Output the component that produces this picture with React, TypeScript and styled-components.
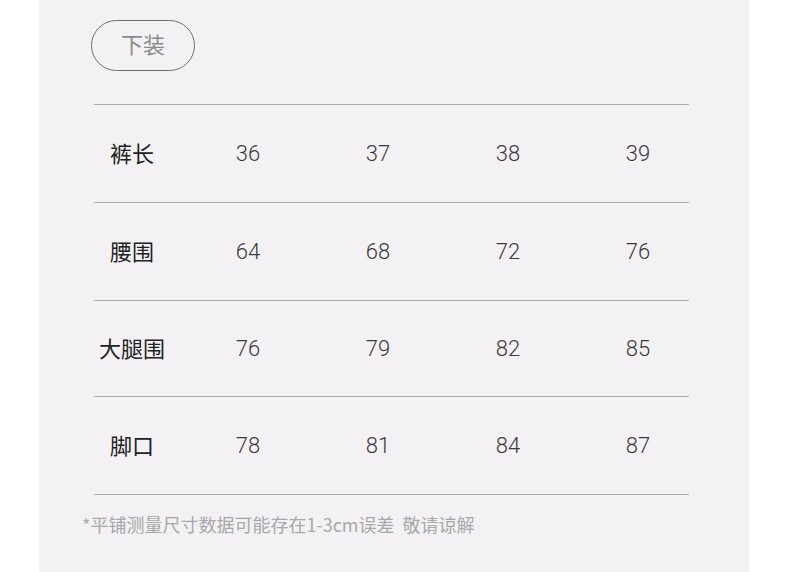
import React from "react";
import styled, { createGlobalStyle } from "styled-components";

const Global = createGlobalStyle`
  html, body { margin: 0; padding: 0; background: #ffffff; }
  body { font-family: "Noto Sans CJK SC", "Noto Sans", sans-serif; }
`;

const Page = styled.div`
  width: 790px;
  height: 572px;
  display: flex;
`;

const Panel = styled.div`
  margin-left: 39px;
  width: 710px;
  height: 572px;
  background: #f3f1f4;
  box-sizing: border-box;
  padding: 20px 0 0 52px;
  display: flex;
  flex-direction: column;
`;

const Pill = styled.div`
  width: 104px;
  height: 51px;
  box-sizing: border-box;
  border: 1px solid #6f6f6f;
  border-radius: 26px;
  display: flex;
  align-items: center;
  justify-content: center;
  font-size: 22px;
  color: #8a8a8a;
  font-family: "Noto Sans CJK SC", sans-serif;
  line-height: 1;
  padding-bottom: 5px;
`;

const Table = styled.div`
  margin-top: 33px;
  margin-left: 3px;
  width: 595px;
  display: flex;
  flex-direction: column;
  border-bottom: 1px solid #ababab;
`;

const Row = styled.div<{ $h: number }>`
  height: ${(p) => p.$h}px;
  border-top: 1px solid #ababab;
  display: grid;
  grid-template-columns: 89px repeat(4, 130px);
  align-items: center;
`;

const Label = styled.div`
  width: 76px;
  text-align: center;
  font-size: 22px;
  color: #222;
  font-family: "Noto Sans CJK SC", sans-serif;
  line-height: 1;
  white-space: nowrap;
  padding-bottom: 4px;
`;

const Num = styled.div`
  text-align: center;
  font-size: 22px;
  color: #3a3a3a;
  font-family: "Roboto", "Noto Sans", sans-serif;
  font-weight: 300;
  line-height: 1;
  padding-top: 1px;
`;

const Note = styled.div`
  margin-top: 17px;
  margin-left: -9px;
  font-size: 18px;
  color: #a8a8a8;
  font-family: "Noto Sans CJK SC", sans-serif;
  line-height: 24px;
  white-space: pre;
`;

const rows: { label: string; values: number[]; h: number }[] = [
  { label: "裤长", values: [36, 37, 38, 39], h: 97 },
  { label: "腰围", values: [64, 68, 72, 76], h: 97 },
  { label: "大腿围", values: [76, 79, 82, 85], h: 95 },
  { label: "脚口", values: [78, 81, 84, 87], h: 97 },
];

export default function App() {
  return (
    <Page>
      <Global />
      <Panel>
        <Pill>下装</Pill>
        <Table>
          {rows.map((r) => (
            <Row key={r.label} $h={r.h}>
              <Label>{r.label}</Label>
              {r.values.map((v, i) => (
                <Num key={i}>{v}</Num>
              ))}
            </Row>
          ))}
        </Table>
        <Note>{"*平铺测量尺寸数据可能存在1-3cm误差  敬请谅解"}</Note>
      </Panel>
    </Page>
  );
}
